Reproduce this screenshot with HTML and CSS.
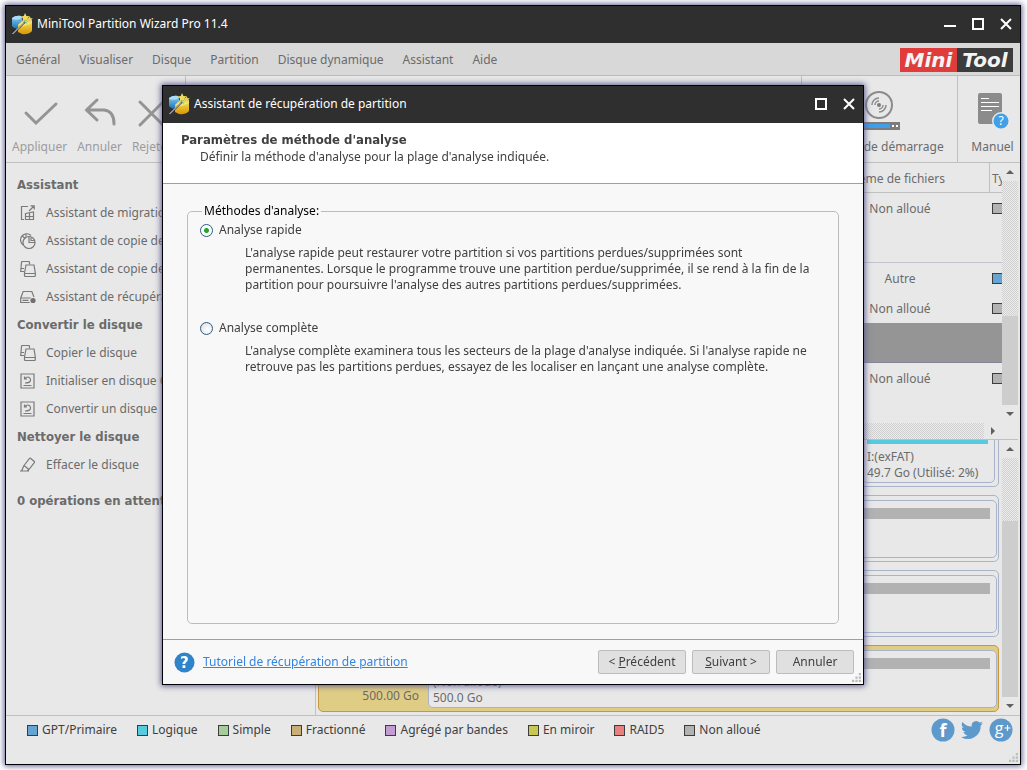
FILE: index.html
```html
<!DOCTYPE html>
<html lang="fr">
<head>
<meta charset="utf-8">
<title>MiniTool Partition Wizard Pro 11.4</title>
<link rel="stylesheet" href="styles.css">
</head>
<body>
<svg class="defs" aria-hidden="true">
  <defs>
    <linearGradient id="gold" x1="0" y1="0" x2="0" y2="1"><stop offset="0" stop-color="#f8e04a"/><stop offset="1" stop-color="#d99408"/></linearGradient>
    <linearGradient id="sky" x1="0" y1="0" x2="0" y2="1"><stop offset="0" stop-color="#8fd2f5"/><stop offset="1" stop-color="#1672b8"/></linearGradient>
    <symbol id="app-icon" viewBox="0 0 22 22">
      <path d="M1 5q4-3 9-2l2 6-6 7q-4-1-5-3z" fill="url(#sky)"/>
      <path d="M1 5q4-3 9-2l1 2q-4 3-10 1z" fill="#a9dcf8"/>
      <path d="M7 12l4-4h10v10q-4 4-10 3l-4-2z" fill="url(#gold)"/>
      <path d="M7 12q7 3 14-2V7l-9 1z" fill="#f3e170"/>
      <path d="M14 0l1.500 3 3 .2-2.200 2.200 1 3-3-1.300-2.800 1.700.5-3.200-2.300-2.100 3.100-.6z" fill="#f6dc55"/>
      <path d="M18.500 3l1 2 2.300.4-1.700 1.600.3 2.200-1.900-1-2 1 .4-2.200-1.600-1.600 2.200-.4z" fill="#dfd065"/>
      <path d="M14.500 6l1 1.800 2 .3-1.500 1.400.3 2-1.800-1-1.800 1 .3-2-1.500-1.400 2-.3z" fill="#a9d68a"/>
      <path d="M2 21L14 9" stroke="#3c434c" stroke-width="1.600"/>
      <path d="M1.500 21L13 9.500" stroke="#dfe3e6" stroke-width="1"/>
    </symbol>
    <symbol id="i-migrate" viewBox="0 0 16 16"><path d="M8 1.500H1.500v13H4M9 6l5-5M10.500.8h3.700v3.700M5.500 8.500l8-1.500v7.500h-8zM5.500 11.500h8M9.500 8v6.500"/></symbol>
    <symbol id="i-pie" viewBox="0 0 16 16"><path d="M3 12Q0 9 .6 6 1.500 1.500 6 .8q3-.3 5 1.700M6 .8v3M2 2.500l3 3"/><circle cx="9" cy="9.500" r="6"/><path d="M9 4v5.500h6M11 4.500v3h3.500"/></symbol>
    <symbol id="i-copy" viewBox="0 0 16 16"><path d="M4 10.500H.7L1.500 1.500q0-1 1-1h6q1 0 1 1v2M.7 7.500H4"/><path d="M6 4h8l1.300 8v2.500q0 1-1 1H5.500q-1 0-1-1V12zM4.500 12.500h10.800"/></symbol>
    <symbol id="i-drive" viewBox="0 0 16 16"><path d="M.7 9l2.500-6.500h8.600L14 8M.7 9h10M.7 9v4.500h9M2.500 11.300h6"/><circle cx="13" cy="11.500" r="2.600" fill="#707070" stroke="none"/></symbol>
    <symbol id="i-convert" viewBox="0 0 16 16"><path d="M1 1h13v14H1zM3.500 12.500h8M5 10q6 0 5.500-3.500Q10 4 7.500 4 6 4 5 6M4.500 3.500V6H7"/></symbol>
    <symbol id="i-erase" viewBox="0 0 16 16"><path d="M4 8.500l5.500-7q.6-.6 1.300 0l3.500 3q.5.500 0 1.200L9 12.500M4 8.500l5 4M4 8.500l-2.500 5.500h5.500l2-1.500M0 14h9"/></symbol>
    <symbol id="grip" viewBox="0 0 8 8"><path d="M6 0h2v2H6zM3 3h2v2H3zM6 3h2v2H6zM0 6h2v2H0zM3 6h2v2H3zM6 6h2v2H6z" fill="#bcbcbc"/></symbol>
    <symbol id="close" viewBox="0 0 12 12"><path d="M1 1l10 10M11 1L1 11" stroke="#fff" stroke-width="2"/></symbol>
    <symbol id="max" viewBox="0 0 12 12"><path d="M1 1h10v10H1z" fill="none" stroke="#fff" stroke-width="2"/></symbol>
  </defs>
</svg>

<main class="window">
  <header class="titlebar">
    <svg class="app-icon"><use href="#app-icon"/></svg>
    <h1 class="title">MiniTool Partition Wizard Pro 11.4</h1>
    <div class="controls">
      <button class="ctl" aria-label="Réduire"><svg viewBox="0 0 12 12"><path d="M0 8h12" stroke="#fff" stroke-width="2"/></svg></button>
      <button class="ctl" aria-label="Agrandir"><svg><use href="#max"/></svg></button>
      <button class="ctl" aria-label="Fermer"><svg><use href="#close"/></svg></button>
    </div>
  </header>

  <nav class="menubar">
    <button class="menu">Général</button>
    <button class="menu">Visualiser</button>
    <button class="menu">Disque</button>
    <button class="menu">Partition</button>
    <button class="menu">Disque dynamique</button>
    <button class="menu">Assistant</button>
    <button class="menu">Aide</button>
    <div class="brand"><span class="brand-mini">Mini</span><span class="brand-tool">Tool</span></div>
  </nav>

  <div class="toolbar">
    <div class="tools tools-left">
      <button class="tool" disabled><svg viewBox="0 0 40 40"><path d="M6 23l10 10 20-19" class="stroke"/></svg>Appliquer</button>
      <button class="tool" disabled><svg viewBox="0 0 40 40"><path d="M17 10L6.500 20 17 30M6.500 20H24q10 1 10 14" class="stroke"/></svg>Annuler</button>
      <button class="tool" disabled><svg viewBox="0 0 40 40"><path d="M8 12l23 23M31 12L8 35" class="stroke"/></svg>Rejeter</button>
    </div>
    <div class="tools tools-boot">
      <button class="tool"><svg viewBox="0 0 40 40"><circle cx="20" cy="15" r="13" fill="none" stroke="#8b8b8b" stroke-width="2"/><circle cx="20" cy="15" r="2" fill="#7b7b7b"/><path d="M13 15a7 7 0 0 1 7-7M16 15a4 4 0 0 1 4-4M27 15a7 7 0 0 1-7 7M24 15a4 4 0 0 1-4 4" fill="none" stroke="#8b8b8b" stroke-width="1.500"/><path d="M0 32h41v8H0z" fill="#7c7c7c"/><path d="M1 34h30v4H1z" fill="#3f9fe8"/><path d="M33 35h2v2h-2zM37 35h2v2h-2z" fill="#fff"/></svg>Support de démarrage</button>
    </div>
    <div class="tools tools-manual">
      <button class="tool"><svg viewBox="0 0 40 40"><path d="M7 3h20q2 0 2 2v29H7q-2 0-2-2V5q0-2 2-2z" fill="#8b8b8b"/><path d="M8 8.500h8M8 12.500h18M8 16.500h18M8 20.500h11" stroke="#fff"/><circle cx="28" cy="31" r="9" fill="#e8e8e8"/><circle cx="28" cy="31" r="7.500" fill="#42a0e8"/><text x="28" y="35" class="q-small">?</text></svg>Manuel</button>
    </div>
  </div>

  <div class="workspace">
    <aside class="sidebar">
      <h2 class="side-head">Assistant</h2>
      <a class="side-item" href="#"><svg><use href="#i-migrate"/></svg>Assistant de migration d'OS</a>
      <a class="side-item" href="#"><svg><use href="#i-pie"/></svg>Assistant de copie de partition</a>
      <a class="side-item" href="#"><svg><use href="#i-copy"/></svg>Assistant de copie de disque</a>
      <a class="side-item" href="#"><svg><use href="#i-drive"/></svg>Assistant de récupération</a>
      <h2 class="side-head">Convertir le disque</h2>
      <a class="side-item" href="#"><svg><use href="#i-copy"/></svg>Copier le disque</a>
      <a class="side-item" href="#"><svg><use href="#i-convert"/></svg>Initialiser en disque GPT</a>
      <a class="side-item" href="#"><svg><use href="#i-convert"/></svg>Convertir un disque</a>
      <h2 class="side-head">Nettoyer le disque</h2>
      <a class="side-item" href="#"><svg><use href="#i-erase"/></svg>Effacer le disque</a>
      <h2 class="side-head pending">0 opérations en attente</h2>
    </aside>

    <div class="panes">
      <section class="pane pane-table">
        <div class="table-col">
          <table class="parts-table">
            <colgroup><col><col class="col-fs"><col class="col-type"></colgroup>
            <thead><tr><th></th><th>Système de fichiers</th><th>Type</th></tr></thead>
            <tbody>
              <tr><td></td><td>Non alloué</td><td><i class="swatch grey"></i></td></tr>
              <tr class="disk-row"><td colspan="3"></td></tr>
              <tr><td></td><td>Autre</td><td><i class="swatch blue"></i></td></tr>
              <tr><td></td><td>Non alloué</td><td><i class="swatch grey"></i></td></tr>
              <tr class="disk-row selected"><td colspan="3"></td></tr>
              <tr><td></td><td>Non alloué</td><td><i class="swatch grey"></i></td></tr>
            </tbody>
          </table>
          <div class="hscroll"><span class="track"></span><span class="arrow right"></span></div>
        </div>
        <div class="vscroll"><span class="arrow up"></span><span class="track"></span><span class="thumb thumb-table"></span><span class="arrow down"></span><span class="corner"></span></div>
      </section>

      <section class="pane pane-map">
        <div class="disks">
          <div class="disk"><div class="disk-label"></div><div class="part part-last"><span class="bar cyan"></span>I:(exFAT)<br>49.7 Go (Utilisé: 2%)</div></div>
          <div class="disk"><div class="disk-label"></div><div class="part"><span class="bar"></span></div></div>
          <div class="disk"><div class="disk-label"></div><div class="part"><span class="bar"></span></div></div>
          <div class="disk selected"><div class="disk-label"><svg class="disk-icon" viewBox="0 0 40 20"><path d="M4 10l18-5 14 5-14 5z" fill="#8f9bb3"/><path d="M4 12l18 3v-5L4 7z" fill="#4a5560"/></svg>500.00 Go</div><div class="part"><span class="bar"></span>(Non alloué)<br>500.0 Go</div></div>
        </div>
        <div class="vscroll"><span class="arrow up"></span><span class="track track-map"></span><span class="thumb thumb-map"></span><span class="arrow down"></span></div>
      </section>
    </div>
  </div>

  <footer class="legend">
    <ul class="legend-list">
      <li><i class="swatch blue"></i>GPT/Primaire</li>
      <li><i class="swatch cyan"></i>Logique</li>
      <li><i class="swatch green"></i>Simple</li>
      <li><i class="swatch tan"></i>Fractionné</li>
      <li><i class="swatch purple"></i>Agrégé par bandes</li>
      <li><i class="swatch olive"></i>En miroir</li>
      <li><i class="swatch red"></i>RAID5</li>
      <li><i class="swatch grey"></i>Non alloué</li>
    </ul>
    <div class="social">
      <a href="#" aria-label="Facebook"><svg viewBox="0 0 24 24"><circle cx="12" cy="12" r="11.500" fill="#5e99cc"/><text x="12" y="19" class="fb">f</text></svg></a>
      <a href="#" aria-label="Twitter"><svg viewBox="0 0 24 24"><path d="M23 5.200a9 9 0 0 1-2.600.7 4.500 4.500 0 0 0 2-2.500 9 9 0 0 1-2.900 1.100 4.500 4.500 0 0 0-7.700 4.100A12.800 12.800 0 0 1 2.500 3.900a4.500 4.500 0 0 0 1.400 6 4.500 4.500 0 0 1-2-.6 4.500 4.500 0 0 0 3.600 4.500 4.500 4.500 0 0 1-2 .1 4.500 4.500 0 0 0 4.200 3.100A9 9 0 0 1 1 18.900a12.800 12.800 0 0 0 19.700-11.400A9 9 0 0 0 23 5.200z" fill="#5e99cc"/></svg></a>
      <a href="#" aria-label="Google+"><svg viewBox="0 0 24 24"><circle cx="12" cy="12" r="11.500" fill="#5e99cc"/><text x="10" y="16" class="gp">g</text><path d="M15.500 10h6M18.500 7v6" stroke="#fff" stroke-width="1.200"/></svg></a>
    </div>
    <svg class="grip"><use href="#grip"/></svg>
  </footer>
</main>

<div class="overlay">
  <form class="dialog" role="dialog" aria-labelledby="dlg-title">
    <header class="titlebar">
      <svg class="app-icon"><use href="#app-icon"/></svg>
      <h2 class="title" id="dlg-title">Assistant de récupération de partition</h2>
      <div class="controls">
        <button type="button" class="ctl" aria-label="Agrandir"><svg><use href="#max"/></svg></button>
        <button type="button" class="ctl" aria-label="Fermer"><svg><use href="#close"/></svg></button>
      </div>
    </header>
    <div class="dlg-head">
      <h3 class="dlg-heading">Paramètres de méthode d'analyse</h3>
      <p class="dlg-sub">Définir la méthode d'analyse pour la plage d'analyse indiquée.</p>
    </div>
    <div class="dlg-body">
      <fieldset class="methods">
        <legend>Méthodes d'analyse:</legend>
        <div class="method">
          <label class="choice"><input type="radio" name="method" checked>Analyse rapide</label>
          <p class="desc">L'analyse rapide peut restaurer votre partition si vos partitions perdues/supprimées sont permanentes. Lorsque le programme trouve une partition perdue/supprimée, il se rend à la fin de la partition pour poursuivre l'analyse des autres partitions perdues/supprimées.</p>
        </div>
        <div class="method">
          <label class="choice"><input type="radio" name="method">Analyse complète</label>
          <p class="desc">L'analyse complète examinera tous les secteurs de la plage d'analyse indiquée. Si l'analyse rapide ne retrouve pas les partitions perdues, essayez de les localiser en lançant une analyse complète.</p>
        </div>
      </fieldset>
    </div>
    <footer class="dlg-foot">
      <svg class="help" viewBox="0 0 22 22"><circle cx="11" cy="11" r="10.500" fill="#2f83c8"/><text x="11" y="17" class="q-big">?</text></svg>
      <a class="tutorial" href="#">Tutoriel de récupération de partition</a>
      <div class="actions">
        <button type="button" class="btn btn-wide">&lt; <u>P</u>récédent</button>
        <button type="button" class="btn"><u>S</u>uivant &gt;</button>
        <button type="button" class="btn">Annuler</button>
      </div>
      <svg class="grip"><use href="#grip"/></svg>
    </footer>
  </form>
</div>
</body>
</html>
```
FILE: styles.css
```css
* { box-sizing: border-box; margin: 0; padding: 0; }

body {
  height: 100vh;
  padding: 5px 6px 5px 5px;
  background: #fff;
  color: #6b6b6b;
  font: 12px/16px "Noto Sans", "DejaVu Sans Condensed", sans-serif;
  overflow: hidden;
}

button { font: inherit; color: inherit; background: none; border: 0; white-space: nowrap; }
h1, h2, h3 { font: inherit; }
a { color: inherit; text-decoration: none; }
svg { display: block; flex: none; }
.defs { position: absolute; width: 0; height: 0; }

.window, .dialog {
  display: flex;
  flex-direction: column;
  border: 1px solid #000;
  box-shadow: 0 0 6px 1px #5a5a8c;
}
.window { height: 100%; background: #e8e8e8; }

.titlebar {
  display: flex;
  align-items: center;
  flex: none;
  height: 37px;
  padding: 0 8px 2px 5px;
  gap: 4px;
  background: #2f2f2f;
  color: #fff;
}
.app-icon { width: 22px; height: 22px; }
.controls { display: flex; gap: 16px; margin-left: auto; }
.ctl, .ctl svg { width: 12px; height: 12px; display: block; }

.menubar {
  display: flex;
  align-items: center;
  flex: none;
  gap: 19px;
  height: 33px;
  padding: 1px 7px 0 10px;
  background: #d8d8d8;
  border-bottom: 1px solid #bcbcbc;
}
.brand {
  display: flex;
  margin-left: auto;
  font: italic bold 20px/24px "DejaVu Sans", sans-serif;
  color: #f4f4f4;
  text-align: center;
}
.brand-mini { width: 57px; background: #e03c3c; }
.brand-tool { width: 56px; background: #3c3c3c; }

.toolbar {
  display: flex;
  flex: none;
  height: 87px;
  border-bottom: 1px solid #c0c0c0;
}
.tools { display: flex; justify-content: center; align-items: flex-start; padding: 14px 6px 0; }
.tools-left { width: 180px; gap: 10px; justify-content: flex-start; border-right: 1px solid #c0c0c0; }
.tools-boot { width: 157px; margin-left: auto; border: solid #c0c0c0; border-width: 0 1px; }
.tools-manual { width: 62px; padding: 14px 0 0 7px; }
.tool { display: flex; flex-direction: column; align-items: center; gap: 9px; }
.tool svg { width: 40px; height: 40px; overflow: visible; }
.tool:disabled { color: #9c9c9c; }
.stroke { fill: none; stroke: #949494; stroke-width: 3; stroke-linecap: round; }
.q-small { font-size: 12px; fill: #fff; text-anchor: middle; }

.workspace { display: flex; flex: 1; min-height: 0; }
.sidebar { width: 309px; padding: 8px 0 0 11px; border-bottom: 1px solid #c0c0c0; }
.side-head { font: bold 13px/28px "DejaVu Sans Condensed", sans-serif; }
.side-item { display: flex; align-items: center; gap: 10px; height: 28px; padding-left: 3px; }
.side-item svg { width: 16px; height: 16px; fill: none; stroke: #7a7a7a; stroke-width: 1.2; }
.pending { margin-top: 8px; }

.panes {
  display: flex;
  flex-direction: column;
  flex: 1;
  min-width: 0;
  padding-right: 2px;
  border-left: 1px solid #c0c0c0;
  border-bottom: 1px solid #c0c0c0;
}
.pane { display: flex; flex: 1; min-height: 0; }
.pane-table { border-bottom: 1px solid #c0c0c0; }
.table-col { display: flex; flex-direction: column; justify-content: space-between; flex: 1; min-width: 0; overflow: hidden; }
.parts-table { width: 100%; border-collapse: separate; border-spacing: 0; table-layout: fixed; }
.col-fs { width: 178px; }
.col-type { width: 13px; }
.parts-table th { height: 30px; font-weight: normal; text-align: left; border-bottom: 1px solid #c0c0c0; padding: 2px 0 0 25px; }
.parts-table th:last-child { padding-left: 2px; border-left: 1px solid #c0c0c0; white-space: nowrap; overflow: hidden; }
.parts-table td { height: 30px; padding-top: 1px; text-align: center; }
.parts-table td:last-child { padding-top: 0; }
.parts-table td:last-child .swatch { display: block; margin-left: 3px; }
.parts-table .disk-row td { height: 40px; border-bottom: 1px solid #c4c4d0; }
.parts-table .selected td { background: #959595; border-bottom: 1px solid #86869a; }

.hscroll { display: flex; height: 16px; }
.track { flex: 1; background: repeating-conic-gradient(#d0d0d0 0 25%, #ececec 0 50%) 0 0 / 2px 2px; }
.vscroll { display: flex; flex-direction: column; flex: none; width: 16px; }
.thumb { background: #cdcdcd; }
.thumb-table { height: 89px; }
.thumb-map { flex: 176; }
.track-map { flex: 64; }
.arrow { flex: none; display: grid; place-items: center; width: 16px; height: 18px; }
.arrow::before { content: ""; border: 4px solid transparent; }
.up::before { border-top: 0; border-bottom-color: #606060; }
.down::before { border-bottom: 0; border-top-color: #606060; }
.right { width: 18px; height: 16px; }
.right::before { border-right: 0; border-left-color: #606060; }
.corner { height: 16px; }

.disks { display: flex; flex-direction: column; justify-content: flex-end; flex: 1; gap: 8px; padding: 0 3px 3px 2px; overflow: hidden; }
.disk { display: flex; flex: none; height: 67px; padding: 4px 1px 3px 0; border: 1px solid #aab4c8; border-radius: 5px; }
.disk-label { width: 109px; }
.part { flex: 1; padding: 7px 6px 0 4px; border: 1px solid #aab4c8; border-radius: 5px; background: #e8e8e8; }
.part-last { flex: none; width: 133px; margin: 0 2px 0 auto; }
.bar { display: block; height: 11px; margin-bottom: 5px; background: #b2b2b2; }
.disk.selected { background: #e0cd85; border-color: #c8963c; }
.selected .disk-label { display: flex; flex-direction: column; align-items: flex-end; justify-content: flex-end; padding: 0 9px 4px 5px; }
.disk-icon { width: 40px; height: 20px; align-self: flex-start; }

.swatch { display: inline-block; flex: none; width: 11px; height: 11px; border: 1px solid #3c3c3c; }
.grey { background: #b2b2b2; }
.blue { background: #66a5d2; }
.cyan { background: #58cae0; }
.green { background: #a5cc9c; }
.tan { background: #caae78; }
.purple { background: #c49cd4; }
.olive { background: #c8c850; }
.red { background: #e88080; }

.legend { position: relative; display: flex; align-items: flex-start; justify-content: space-between; flex: none; height: 48px; padding: 2px 7px 0 21px; color: #404040; }
.legend-list { display: flex; gap: 20px; padding-top: 4px; list-style: none; white-space: nowrap; }
.legend-list li { display: flex; align-items: center; gap: 4px; }
.social { display: flex; gap: 5px; }
.social svg { width: 24px; height: 24px; }
.fb { font: bold 18px "Open Sans", sans-serif; fill: #fff; text-anchor: middle; }
.gp { font: 16px "Open Sans", sans-serif; fill: #fff; text-anchor: middle; }
.grip { position: absolute; right: 2px; bottom: 2px; width: 9px; height: 9px; }

.overlay { position: fixed; inset: 0 1px 0 0; display: grid; place-items: center; }
.dialog { width: 702px; max-width: 100%; height: 600px; max-height: 100%; background: #f8f8f8; color: #404040; }
.dlg-head { flex: none; height: 61px; padding: 9px 18px 0; background: #fff; border-bottom: 1px solid #a0a0a0; }
.dlg-heading { font: bold 13px/16px "DejaVu Sans Condensed", sans-serif; }
.dlg-sub { padding: 1px 0 0 19px; }
.dlg-body { display: flex; flex: 1; padding: 19px 24px 15px; }
.methods { flex: 1; min-width: 0; padding: 2px 18px 0 12px; border: 1px solid #bcbcbc; border-radius: 5px; }
.methods legend { margin-left: 2px; padding: 0 2px; color: #000; }
.method { margin-bottom: 26px; }
.choice { display: flex; align-items: center; gap: 6px; height: 18px; }
.choice input { appearance: none; width: 13px; height: 13px; border: 1px solid #2c5a80; border-radius: 50%; background: radial-gradient(circle at 60% 60%, #fff, #dcdcdc); }
.choice input:checked { background: radial-gradient(circle, #28a428 0 2px, #fff 3px); }
.desc { padding: 6px 0 0 45px; }
.dlg-foot { position: relative; display: flex; align-items: center; flex: none; gap: 8px; height: 45px; padding: 0 9px 0 11px; border-top: 1px solid #a0a0a0; }
.help { width: 21px; height: 21px; }
.q-big { font: bold 16px "DejaVu Sans", sans-serif; fill: #fff; text-anchor: middle; }
.tutorial { color: #3584e0; text-decoration: underline; }
.actions { display: flex; gap: 6px; margin-left: auto; }
.btn { width: 78px; height: 24px; background: #e0e0e0; border: 1px solid #bcbcbc; border-radius: 2px; }
.btn-wide { width: 88px; }
```
